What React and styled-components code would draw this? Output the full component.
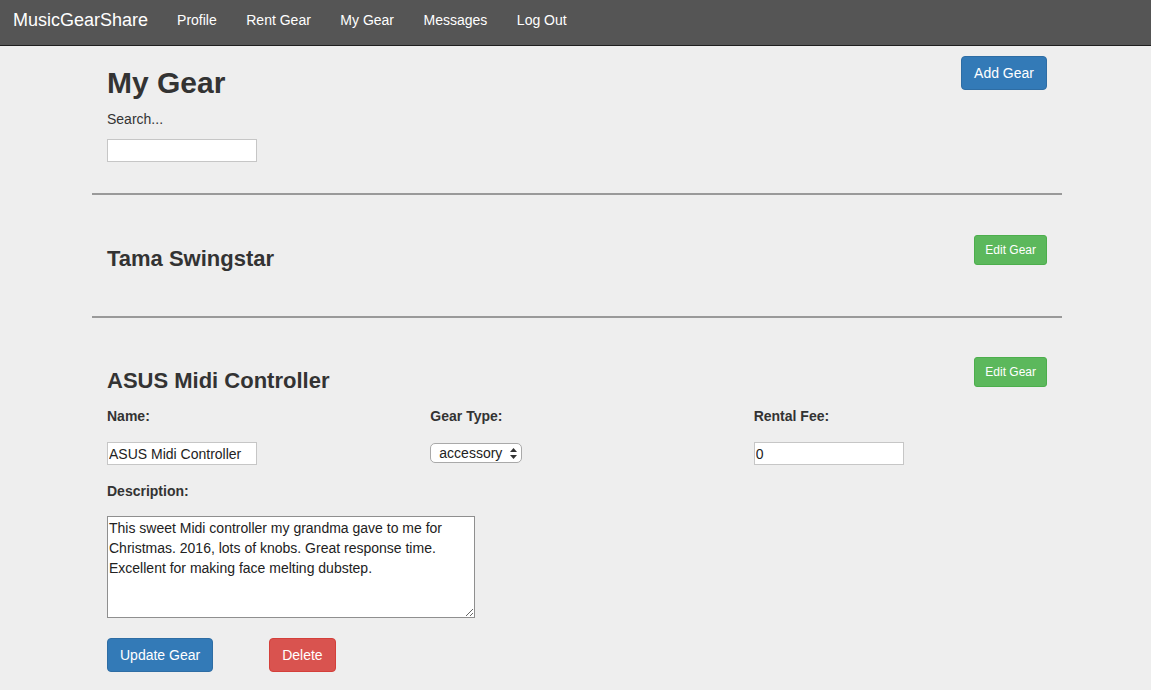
import React from "react";
import styled, { createGlobalStyle } from "styled-components";

const GlobalStyle = createGlobalStyle`
  * { box-sizing: border-box; }
  body {
    margin: 0;
    background: #eeeeee;
    font-family: "Liberation Sans", Helvetica, Arial, sans-serif;
    font-size: 14px;
    line-height: 20px;
    color: #333333;
  }
`;

const Navbar = styled.nav`
  display: flex;
  align-items: center;
  height: 46px;
  padding-bottom: 5px;
  background: #555555;
  border-bottom: 1px solid #1e1e1e;
`;

const Brand = styled.a`
  font-size: 18px;
  line-height: 20px;
  color: #ffffff;
  padding: 0 14.25px 0 13px;
  text-decoration: none;
`;

const NavLink = styled.a`
  font-size: 14px;
  line-height: 20px;
  color: #ffffff;
  padding: 0 14.75px;
  text-decoration: none;
`;

const Page = styled.div`
  padding-left: 3px;
`;

const Container = styled.main`
  width: 970px;
  margin: 0 auto;
`;

const TopSection = styled.section`
  display: flex;
  justify-content: space-between;
  align-items: flex-start;
  padding: 0 15px 31px;
`;

const TopLeft = styled.div`
  display: flex;
  flex-direction: column;
  align-items: flex-start;
`;

const PageTitle = styled.h2`
  font-size: 30px;
  line-height: 33px;
  font-weight: 700;
  margin: 20px 0 10px;
`;

const PlainLabel = styled.label`
  display: block;
  font-size: 14px;
  line-height: 20px;
  margin-bottom: 10px;
`;

const TextInput = styled.input`
  width: 150px;
  height: 23px;
  padding: 0 1px;
  border: 1px solid #c6c6c6;
  background: #ffffff;
  font-family: "Liberation Sans", Helvetica, Arial, sans-serif;
  font-size: 14px;
  color: #222;
  outline: none;
`;

const Button = styled.button`
  display: inline-block;
  font-family: "Liberation Sans", Helvetica, Arial, sans-serif;
  font-size: ${(p) => (p.$small ? "12px" : "14px")};
  line-height: ${(p) => (p.$small ? "18px" : "20px")};
  padding: ${(p) => (p.$small ? "5px 10px" : "6px 12px")};
  border-radius: ${(p) => (p.$small ? "3px" : "4px")};
  color: #ffffff;
  cursor: pointer;
  margin-top: ${(p) => p.$mt || "0"};
  background: ${(p) =>
    p.$variant === "success" ? "#5cb85c" : p.$variant === "danger" ? "#d9534f" : "#337ab7"};
  border: 1px solid
    ${(p) =>
      p.$variant === "success" ? "#4cae4c" : p.$variant === "danger" ? "#d43f3a" : "#2e6da4"};
`;

const Rule = styled.hr`
  margin: 0;
  height: 2px;
  border: none;
  background: #999999;
`;

const GearItem = styled.section`
  padding: ${(p) => (p.$open ? "39px 15px 20px" : "40px 15px 45px")};
`;

const GearHeader = styled.div`
  display: flex;
  justify-content: space-between;
  align-items: flex-start;
`;

const GearTitle = styled.h3`
  font-size: 22px;
  line-height: 24px;
  font-weight: 700;
  margin: 12px 0 0;
`;

const FieldGrid = styled.div`
  display: grid;
  grid-template-columns: repeat(3, 1fr);
  column-gap: 30px;
  margin-top: 13px;
`;

const Field = styled.div`
  display: flex;
  flex-direction: column;
  align-items: flex-start;
`;

const FieldLabel = styled.label`
  display: block;
  font-weight: 700;
  font-size: 14px;
  line-height: 20px;
  margin-bottom: ${(p) => p.$mb || "16px"};
`;

const SelectWrap = styled.span`
  position: relative;
  display: inline-block;
  margin-top: 1px;
`;

const Select = styled.select`
  appearance: none;
  -webkit-appearance: none;
  width: 92px;
  height: 20px;
  padding: 0 18px 0 8px;
  border: 1px solid #a9a9a9;
  border-radius: 5px;
  background: #ffffff;
  font-family: "Liberation Sans", Helvetica, Arial, sans-serif;
  font-size: 14px;
  line-height: 18px;
  color: #222;
  outline: none;
`;

const Arrows = styled.svg`
  position: absolute;
  right: 5px;
  top: 5px;
  pointer-events: none;
`;

const DescField = styled.div`
  margin-top: 16px;
`;

const TextArea = styled.textarea`
  display: block;
  width: 368px;
  height: 102px;
  padding: 1px 1px;
  border: 1px solid #8f8f8f;
  background: #ffffff;
  font-family: "Liberation Sans", Helvetica, Arial, sans-serif;
  font-size: 14px;
  line-height: 20px;
  color: #222;
  outline: none;
`;

const Actions = styled.div`
  display: flex;
  gap: 56px;
  margin-top: 20px;
`;

export default function App() {
  return (
    <>
      <GlobalStyle />
      <Navbar>
        <Brand href="#">MusicGearShare</Brand>
        <NavLink href="#">Profile</NavLink>
        <NavLink href="#">Rent Gear</NavLink>
        <NavLink href="#">My Gear</NavLink>
        <NavLink href="#">Messages</NavLink>
        <NavLink href="#">Log Out</NavLink>
      </Navbar>
      <Page>
        <Container>
          <TopSection>
            <TopLeft>
              <PageTitle>My Gear</PageTitle>
              <PlainLabel>Search...</PlainLabel>
              <TextInput type="text" />
            </TopLeft>
            <Button $mt="10px">Add Gear</Button>
          </TopSection>
          <Rule />
          <GearItem>
            <GearHeader>
              <GearTitle>Tama Swingstar</GearTitle>
              <Button $small $variant="success">Edit Gear</Button>
            </GearHeader>
          </GearItem>
          <Rule />
          <GearItem $open>
            <GearHeader>
              <GearTitle>ASUS Midi Controller</GearTitle>
              <Button $small $variant="success">Edit Gear</Button>
            </GearHeader>
            <FieldGrid>
              <Field>
                <FieldLabel>Name:</FieldLabel>
                <TextInput type="text" defaultValue="ASUS Midi Controller" />
              </Field>
              <Field>
                <FieldLabel>Gear Type:</FieldLabel>
                <SelectWrap>
                  <Select defaultValue="accessory">
                    <option value="accessory">accessory</option>
                    <option value="instrument">instrument</option>
                    <option value="amp">amp</option>
                  </Select>
                  <Arrows width="7" height="11" viewBox="0 0 7 11">
                    <path d="M3.5 0 L7 4 L0 4 Z" fill="#333" />
                    <path d="M3.5 11 L7 7 L0 7 Z" fill="#333" />
                  </Arrows>
                </SelectWrap>
              </Field>
              <Field>
                <FieldLabel>Rental Fee:</FieldLabel>
                <TextInput type="text" defaultValue="0" />
              </Field>
            </FieldGrid>
            <DescField>
              <FieldLabel $mb="15px">Description:</FieldLabel>
              <TextArea defaultValue="This sweet Midi controller my grandma gave to me for Christmas. 2016, lots of knobs. Great response time. Excellent for making face melting dubstep." />
            </DescField>
            <Actions>
              <Button>Update Gear</Button>
              <Button $variant="danger">Delete</Button>
            </Actions>
          </GearItem>
        </Container>
      </Page>
    </>
  );
}
